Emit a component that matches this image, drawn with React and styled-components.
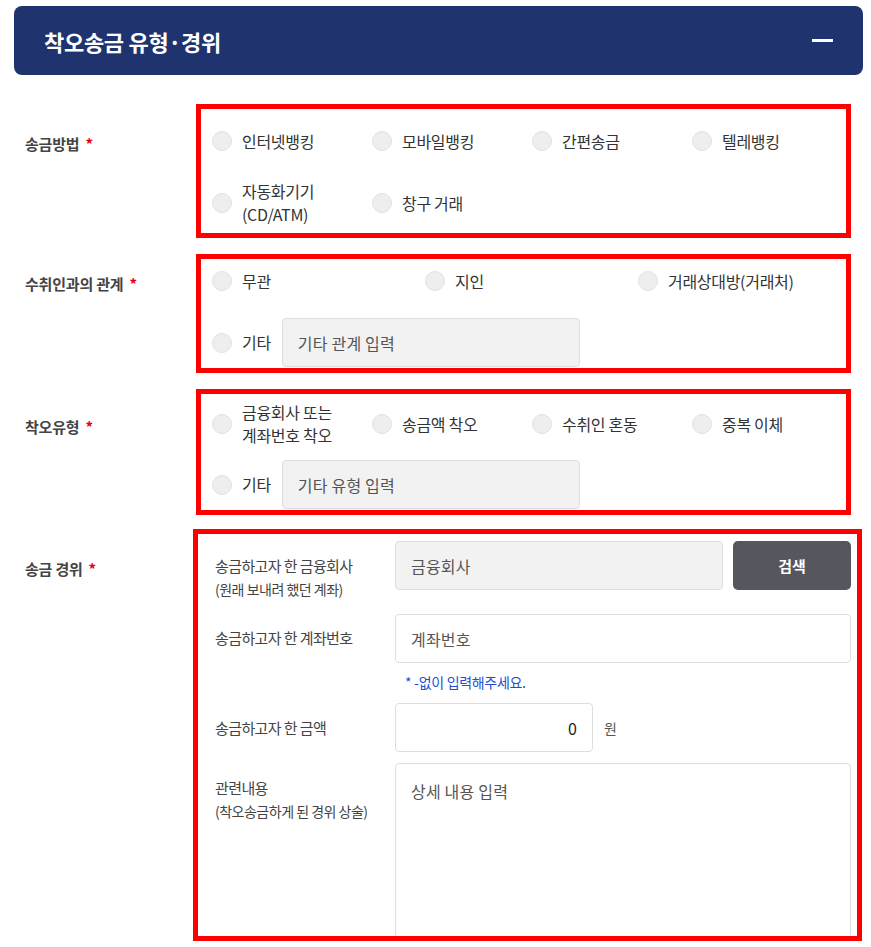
import styled, { createGlobalStyle } from "styled-components";

const GlobalStyle = createGlobalStyle`
  body {
    margin: 0;
    background: #fff;
    font-family: "Noto Sans CJK KR", "Noto Sans", sans-serif;
    color: #333;
  }
  * { box-sizing: border-box; }
`;

// ---- PAGE / HEADER ----
const Page = styled.div`
  width: 871px;
  padding: 6px 8px 0 14px;
`;

const Header = styled.div`
  height: 69px;
  background: #1f346f;
  border-radius: 8px;
  display: flex;
  align-items: center;
  justify-content: space-between;
  padding: 0 30px 0 30px;
`;

const Title = styled.h2`
  margin: 0;
  font-size: 22px;
  font-weight: 700;
  letter-spacing: -0.3px;
  color: #fff;
`;

const Collapse = styled.span`
  display: block;
  width: 21px;
  height: 3px;
  background: #fff;
`;

// ---- SECTIONS ----
const Form = styled.div`
  padding-top: 29px;
`;

const Section = styled.div`
  display: grid;
  grid-template-columns: 182px 1fr;
  margin-top: ${p => p.$mt || 0}px;
`;

const Label = styled.div`
  padding: ${p => p.$top}px 0 0 11px;
  font-size: 15px;
  line-height: 21px;
  font-weight: 700;
  color: #444;
  letter-spacing: -0.2px;
`;

const Req = styled.span`
  color: #e60012;
  margin-left: 6px;
`;

// red outline marking a group
const Mark = styled.div`
  border: 5px solid #ff0000;
  margin: 0 ${p => p.$right}px 0 ${p => p.$left}px;
  padding: ${p => p.$pad};
  display: flex;
  flex-direction: column;
  gap: ${p => p.$gap || 0}px;
  height: ${p => p.$h || "auto"};
  overflow: hidden;
`;

const OptionGrid = styled.div`
  display: grid;
  grid-template-columns: repeat(${p => p.$cols}, ${p => p.$colW}px);
  row-gap: ${p => p.$rowGap || 0}px;
  align-items: center;
`;

const Option = styled.label`
  display: flex;
  align-items: center;
  gap: 10px;
  min-height: 42px;
  font-size: 16px;
  line-height: 23px;
  letter-spacing: -0.3px;
  color: #333;
`;

const Radio = styled.span`
  flex: none;
  width: 20px;
  height: 20px;
  border-radius: 50%;
  background: #eeeeee;
  border: 1px solid #e2e2e2;
`;

const OtherRow = styled.div`
  display: flex;
  align-items: center;
  gap: 11px;
`;

const Field = styled.div`
  width: ${p => p.$w ? p.$w + "px" : "auto"};
  flex: ${p => p.$w ? "none" : 1};
  height: ${p => p.$h || 49}px;
  border: 1px solid #dedede;
  border-radius: 4px;
  background: ${p => p.$grey ? "#f2f2f2" : "#fff"};
  padding: 0 15px;
  display: flex;
  align-items: center;
  justify-content: ${p => p.$right ? "flex-end" : "flex-start"};
  font-size: 16px;
  letter-spacing: 0.2px;
  color: ${p => p.$dark ? "#222" : "#555"};
`;

// ---- 송금 경위 rows ----
const FieldRow = styled.div`
  display: grid;
  grid-template-columns: 180px 1fr;
  align-items: start;
  margin-top: ${p => p.$mt || 0}px;
`;

const FieldLabel = styled.div`
  padding-top: ${p => p.$top || 13}px;
  font-size: 15px;
  line-height: 24px;
  letter-spacing: -0.6px;
  color: #444;
`;

const SubLabel = styled.div`
  font-size: 14px;
  line-height: 22px;
  letter-spacing: -0.5px;
  color: #444;
`;

const Inline = styled.div`
  display: flex;
  align-items: center;
  gap: ${p => p.$gap || 10}px;
`;

const SearchButton = styled.button`
  width: 118px;
  height: 49px;
  border: 0;
  border-radius: 5px;
  background: #55565e;
  color: #fff;
  font-family: inherit;
  font-size: 15px;
  font-weight: 700;
`;

const Note = styled.div`
  margin: 9px 0 0 10px;
  font-size: 14px;
  line-height: 20px;
  letter-spacing: -0.3px;
  color: #1f4fd0;
`;

const Unit = styled.span`
  font-size: 14px;
  color: #555;
`;

const TextArea = styled.textarea`
  display: block;
  width: 100%;
  height: 184px;
  border: 1px solid #dedede;
  border-radius: 4px;
  padding: 15px;
  font-family: inherit;
  font-size: 16px;
  line-height: 24px;
  letter-spacing: 0.2px;
  resize: none;
  &::placeholder { color: #555; }
`;

const methods = ["인터넷뱅킹", "모바일뱅킹", "간편송금", "텔레뱅킹", ["자동화기기", "(CD/ATM)"], "창구 거래"];
const relations = ["무관", "지인", "거래상대방(거래처)"];
const types = [["금융회사 또는", "계좌번호 착오"], "송금액 착오", "수취인 혼동", "중복 이체"];

function Choice({ text }) {
  const lines = Array.isArray(text) ? text : [text];
  return (
    <Option>
      <Radio />
      <span>
        {lines.map((l, i) => (
          <span key={i}>{i > 0 && <br />}{l}</span>
        ))}
      </span>
    </Option>
  );
}

export default function App() {
  return (
    <>
      <GlobalStyle />
      <Page>
        <Header>
          <Title>착오송금 유형·경위</Title>
          <Collapse />
        </Header>

        <Form>
          {/* 송금방법 */}
          <Section>
            <Label $top={29}>송금방법<Req>*</Req></Label>
            <Mark $left={0} $right={12} $pad="11px 0 7px 11px">
              <OptionGrid $cols={4} $colW={160} $rowGap={18}>
                {methods.map((m, i) => <Choice key={i} text={m} />)}
              </OptionGrid>
            </Mark>
          </Section>

          {/* 수취인과의 관계 */}
          <Section $mt={16}>
            <Label $top={19}>수취인과의 관계<Req>*</Req></Label>
            <Mark $left={0} $right={12} $pad="1px 0 1px 11px" $gap={16}>
              <OptionGrid $cols={3} $colW={213}>
                {relations.map((r, i) => <Choice key={i} text={r} />)}
              </OptionGrid>
              <OtherRow>
                <Choice text="기타" />
                <Field $w={298} $grey>기타 관계 입력</Field>
              </OtherRow>
            </Mark>
          </Section>

          {/* 착오유형 */}
          <Section $mt={16}>
            <Label $top={27}>착오유형<Req>*</Req></Label>
            <Mark $left={0} $right={12} $pad="7px 0 1px 11px" $gap={13}>
              <OptionGrid $cols={4} $colW={160}>
                {types.map((t, i) => <Choice key={i} text={t} />)}
              </OptionGrid>
              <OtherRow>
                <Choice text="기타" />
                <Field $w={298} $grey>기타 유형 입력</Field>
              </OtherRow>
            </Mark>
          </Section>

          {/* 송금 경위 */}
          <Section $mt={14}>
            <Label $top={29}>송금 경위<Req>*</Req></Label>
            <Mark $left={-3} $right={1} $pad="7px 6px 0 17px" $h="412px">
              <FieldRow>
                <FieldLabel>
                  송금하고자 한 금융회사
                  <SubLabel>(원래 보내려 했던 계좌)</SubLabel>
                </FieldLabel>
                <Inline>
                  <Field $grey>금융회사</Field>
                  <SearchButton>검색</SearchButton>
                </Inline>
              </FieldRow>

              <FieldRow $mt={14}>
                <FieldLabel $top={12}>송금하고자 한 계좌번호</FieldLabel>
                <div>
                  <Field>계좌번호</Field>
                  <Note>* -없이 입력해주세요.</Note>
                </div>
              </FieldRow>

              <FieldRow $mt={11}>
                <FieldLabel>송금하고자 한 금액</FieldLabel>
                <Inline $gap={11}>
                  <Field $w={198} $right $dark>0</Field>
                  <Unit>원</Unit>
                </Inline>
              </FieldRow>

              <FieldRow $mt={11}>
                <FieldLabel>
                  관련내용
                  <SubLabel>(착오송금하게 된 경위 상술)</SubLabel>
                </FieldLabel>
                <TextArea placeholder="상세 내용 입력" />
              </FieldRow>
            </Mark>
          </Section>
        </Form>
      </Page>
    </>
  );
}
